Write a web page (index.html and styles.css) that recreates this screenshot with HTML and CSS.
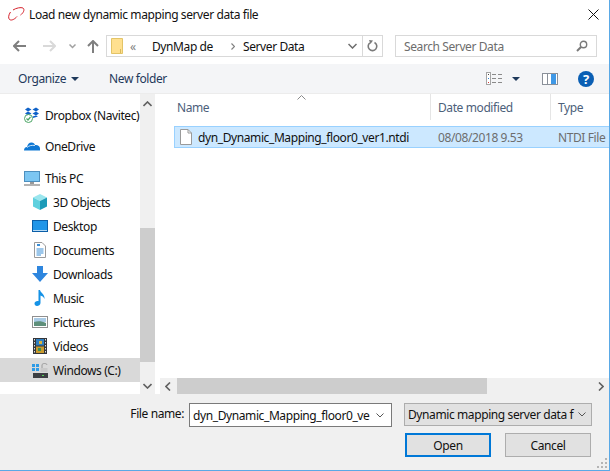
FILE: index.html
```html
<!DOCTYPE html>
<html lang="en">
<head>
  <meta charset="UTF-8">
  <title>Load new dynamic mapping server data file</title>
  <link rel="stylesheet" href="styles.css">
</head>
<body>

  <div class="window">

    <div class="titlebar">
      <svg class="logo" width="17" height="14" viewBox="0 0 17 14"><path d="M5 3C8 1 13 0 15 1C17 2.500 15.500 6 12.500 8M2.500 5C0.500 8 0 11 1.500 12.500C3.500 14 7 12 9 9.500" fill="none" stroke="#d5222c" stroke-width="1"/></svg>
      <span class="title">Load new dynamic mapping server data file</span>
      <svg class="close" width="11" height="11" viewBox="0 0 11 11"><path d="M0.500 0.500L10.500 10.500M10.500 0.500L0.500 10.500" stroke="#111" stroke-width="1"/></svg>
    </div>

    <div class="navbar">
      <svg class="nav-icon" width="13" height="12" viewBox="0 0 13 12"><path d="M6 1L1 6L6 11M1 6H13" fill="none" stroke="#7f7f7f" stroke-width="2"/></svg>
      <svg class="nav-icon forward" width="13" height="12" viewBox="0 0 13 12"><path d="M7 1L12 6L7 11M12 6H0" fill="none" stroke="#d9d9d9" stroke-width="2"/></svg>
      <svg class="nav-icon recent" width="7" height="5" viewBox="0 0 7 5"><path d="M0.500 0.500L3.500 3.500L6.500 0.500" fill="none" stroke="#a0a0a0" stroke-width="1.500"/></svg>
      <svg class="nav-icon up" width="12" height="13" viewBox="0 0 12 13"><path d="M1 6L6 1L11 6M6 1V13" fill="none" stroke="#7f7f7f" stroke-width="2"/></svg>

      <div class="address">
        <svg class="folder" width="12" height="16" viewBox="0 0 12 16"><path d="M0.500 0.500H11.500V15.500H0.500Z" fill="#ffe08f" stroke="#e3c467"/><path d="M9.500 11V15" stroke="#d8b95e"/></svg>
        <span class="crumb-more">«</span>
        <span class="crumb">DynMap de</span>
        <svg class="crumb-sep" width="4" height="7" viewBox="0 0 4 7"><path d="M0.500 0.500L3.500 3.500L0.500 6.500" fill="none" stroke="#808080" stroke-width="1.200"/></svg>
        <span class="crumb">Server Data</span>
        <svg class="address-down" width="9" height="6" viewBox="0 0 9 6"><path d="M0.500 1L4.500 5L8.500 1" fill="none" stroke="#6d6d6d" stroke-width="1.500"/></svg>
        <div class="refresh">
          <svg width="11" height="12" viewBox="0 0 11 12"><path d="M7.500 2.500A4.300 4.300 0 1 1 3 2.800" fill="none" stroke="#7a7a7a" stroke-width="1.600"/><path d="M2 0L6 0.500L3.500 4Z" fill="#7a7a7a"/></svg>
        </div>
      </div>

      <div class="search">
        <span>Search Server Data</span>
        <svg width="12" height="12" viewBox="0 0 12 12"><circle cx="7.500" cy="4.500" r="3.200" fill="none" stroke="#7a7a7a" stroke-width="1.400"/><path d="M5 7L1 11" stroke="#7a7a7a" stroke-width="2"/></svg>
      </div>
    </div>

    <div class="toolbar">
      <span class="tool">Organize</span>
      <span class="caret"></span>
      <span class="tool new-folder">New folder</span>
      <svg class="views" width="16" height="13" viewBox="0 0 16 13">
        <rect x="0.500" y="0.500" width="4" height="12" fill="#fff" stroke="#a5a5a5"/>
        <rect x="2" y="2" width="1" height="1" fill="#444"/>
        <rect x="2" y="6" width="1" height="1" fill="#2d7fd0"/>
        <rect x="2" y="10" width="1" height="1" fill="#d53a3a"/>
        <path d="M6 2.500H10M12 2.500H16M6 6.500H10M12 6.500H16M6 10.500H10M12 10.500H16" stroke="#8a8a8a"/>
      </svg>
      <span class="caret views-caret"></span>
      <svg class="pane-toggle" width="16" height="12" viewBox="0 0 16 12">
        <rect x="0.500" y="0.500" width="15" height="11" fill="#fff" stroke="#8a9099"/>
        <path d="M5.500 0.500V11.500" stroke="#8a9099"/>
        <rect x="9" y="1" width="5" height="10" fill="#3f98e6"/>
      </svg>
      <div class="help">?</div>
    </div>

    <div class="main">
      <div class="nav-pane">
        <div class="nav-list">

          <div class="nav-item top-item">
            <svg class="item-icon" width="16" height="16" viewBox="0 0 16 16">
              <path d="M1 2.500L4 0.500L7.500 2.500L4 4.500ZM8.500 2.500L12 0.500L15 2.500L12 4.500ZM1 6.500L4 4.500L7.500 6.500L4 8.500ZM8.500 6.500L12 4.500L15 6.500L12 8.500ZM8.500 9.500L12 8.500L14 9.500L9 11Z" fill="#0f62c8"/>
              <circle cx="4.500" cy="11.500" r="4" fill="#fff" stroke="#4aa564"/>
              <path d="M2.500 11.500L4 13L6.500 10" fill="none" stroke="#4aa564" stroke-width="1.200"/>
            </svg>
            <span>Dropbox (Navitec)</span>
          </div>

          <div class="nav-item top-item onedrive">
            <svg class="item-icon" width="16" height="10" viewBox="0 0 16 10"><path d="M0 9.500C0 7 1.500 6 3 6C3.500 3.500 5 1.500 7.500 1.500C9.500 1.500 10.500 2.500 11 4C13.500 3.500 16 5 16 7.500V9.500Z" fill="#0f78d4"/><path d="M3 6.500C5 4.500 8 4 11 4.500" fill="none" stroke="#fff" stroke-width="0.800"/></svg>
            <span>OneDrive</span>
          </div>

          <div class="nav-item top-item this-pc">
            <svg class="item-icon" width="16" height="15" viewBox="0 0 16 15"><rect x="0.500" y="0.500" width="15" height="10" fill="#7cc6f2" stroke="#4d8fbe"/><path d="M6 11H10V13H6Z" fill="#9a9a9a"/><path d="M0 14H16" stroke="#9a9a9a" stroke-width="1.500"/></svg>
            <span>This PC</span>
          </div>

          <div class="nav-item">
            <svg class="item-icon" width="16" height="16" viewBox="0 0 16 16"><path d="M8 0L15 3.500L8 7L1 3.500Z" fill="#9be6ee"/><path d="M1 3.500L8 7V16L1 12.500Z" fill="#5fd0de"/><path d="M15 3.500L8 7V16L15 12.500Z" fill="#1c9bb8"/></svg>
            <span>3D Objects</span>
          </div>

          <div class="nav-item">
            <svg class="item-icon" width="16" height="12" viewBox="0 0 16 12"><rect x="0.500" y="0.500" width="15" height="11" fill="#1f95e8" stroke="#0a5ea8"/><path d="M1 10.500H15" stroke="#b9dcf6"/></svg>
            <span>Desktop</span>
          </div>

          <div class="nav-item">
            <svg class="item-icon" width="16" height="16" viewBox="0 0 12 16"><path d="M0.500 0.500H8L11.500 4V15.500H0.500Z" fill="#fff" stroke="#9a9a9a"/><path d="M2.500 7H9.500M2.500 9H9.500M2.500 11H9.500M2.500 13H7" stroke="#3b8fd6"/><path d="M3 3H6" stroke="#3b8fd6" stroke-width="2"/></svg>
            <span>Documents</span>
          </div>

          <div class="nav-item">
            <svg class="item-icon" width="16" height="16" viewBox="0 0 16 16"><path d="M5 0H11V7H16L8 16L0 7H5Z" fill="#2e86de"/></svg>
            <span>Downloads</span>
          </div>

          <div class="nav-item">
            <svg class="item-icon" width="16" height="16" viewBox="0 0 11 16"><path d="M4 0H5.500C6 3 10.500 4 10 9C9 6.500 7.500 6 6 5.500V13C6 15 4 16 2.500 16C1 16 0 15 0 13.500C0 12 1.500 11 3 11C3.500 11 4 11.100 4 11.200Z" fill="#1592e6"/></svg>
            <span>Music</span>
          </div>

          <div class="nav-item">
            <svg class="item-icon" width="16" height="12" viewBox="0 0 16 12"><rect x="0.500" y="0.500" width="15" height="11" fill="#fff" stroke="#8f8f8f"/><rect x="2" y="2" width="12" height="4" fill="#a9cbe6"/><path d="M2 6C6 4.500 10 5 14 7V10H2Z" fill="#5e8f7a"/></svg>
            <span>Pictures</span>
          </div>

          <div class="nav-item">
            <svg class="item-icon" width="16" height="16" viewBox="0 0 14 16"><rect width="14" height="16" fill="#33363a"/><rect x="3" y="1" width="8" height="6.500" fill="#2f7fc0"/><rect x="3" y="8.500" width="8" height="6.500" fill="#c99a2e"/><rect x="6" y="3" width="3" height="3" fill="#d9b23c"/><rect x="5" y="10" width="3" height="3" fill="#3a8f5a"/><path d="M1.500 1V15M12.500 1V15" stroke="#ddd" stroke-dasharray="1.500 1.500"/></svg>
            <span>Videos</span>
          </div>

          <div class="nav-item selected">
            <svg class="item-icon" width="16" height="16" viewBox="0 0 16 16">
              <path d="M0 2H3V5H0ZM4 2H7V5H4ZM0 6H3V9H0ZM4 6H7V9H4Z" fill="#2e9be6"/>
              <path d="M10 6V3C10 1 15 1 15 3" fill="none" stroke="#9a9a9a"/>
              <rect x="8.500" y="6" width="7" height="4" fill="#c9c9c9"/>
              <rect x="1" y="11" width="15" height="5" fill="#3c3f42"/>
              <rect x="10" y="13" width="2" height="1" fill="#58d058"/>
            </svg>
            <span>Windows (C:)</span>
          </div>

        </div>

        <div class="vscroll">
          <div class="arrow-box up-box">
            <svg width="9" height="6" viewBox="0 0 9 6"><path d="M0.500 5L4.500 1L8.500 5" fill="none" stroke="#606060" stroke-width="1.600"/></svg>
          </div>
          <div class="thumb-v"></div>
          <div class="arrow-box down-box">
            <svg width="9" height="6" viewBox="0 0 9 6"><path d="M0.500 1L4.500 5L8.500 1" fill="none" stroke="#606060" stroke-width="1.600"/></svg>
          </div>
        </div>
      </div>

      <div class="files">
        <div class="file-head">
          <div class="col col-name">Name<svg class="sort" width="9" height="5" viewBox="0 0 9 5"><path d="M0.500 4.500L4.500 0.500L8.500 4.500" fill="none" stroke="#8a8a8a"/></svg></div>
          <div class="col">Date modified</div>
          <div class="col col-last">Type</div>
        </div>

        <div class="file-row">
          <div class="file-name">
            <svg width="12" height="16" viewBox="0 0 12 16"><path d="M0.500 0.500H8L11.500 4V15.500H0.500Z" fill="#fff" stroke="#9a9a9a"/><path d="M8 0.500V4H11.500" fill="none" stroke="#9a9a9a"/></svg>
            <span>dyn_Dynamic_Mapping_floor0_ver1.ntdi</span>
          </div>
          <div class="file-info">08/08/2018 9.53</div>
          <div class="file-info">NTDI File</div>
        </div>

        <div class="hscroll">
          <svg class="h-left" width="6" height="9" viewBox="0 0 6 9"><path d="M5 0.500L1 4.500L5 8.500" fill="none" stroke="#606060" stroke-width="1.600"/></svg>
          <div class="thumb-h"></div>
          <svg class="h-right" width="6" height="9" viewBox="0 0 6 9"><path d="M1 0.500L5 4.500L1 8.500" fill="none" stroke="#606060" stroke-width="1.600"/></svg>
        </div>
      </div>
    </div>

    <div class="bottom">
      <div class="file-line">
        <label class="file-label">File name:</label>
        <div class="name-box">
          <span class="clip">dyn_Dynamic_Mapping_floor0_ve</span>
          <svg width="8" height="5" viewBox="0 0 8 5"><path d="M0.500 0.500L4 4L7.500 0.500" fill="none" stroke="#555"/></svg>
        </div>
        <div class="filter-box">
          <span class="clip">Dynamic mapping server data f</span>
          <svg width="8" height="5" viewBox="0 0 8 5"><path d="M0.500 0.500L4 4L7.500 0.500" fill="none" stroke="#555"/></svg>
        </div>
      </div>
      <div class="actions">
        <button type="button" class="btn btn-open">Open</button>
        <button type="button" class="btn">Cancel</button>
      </div>
      <svg class="grip" width="11" height="11" viewBox="0 0 11 11"><path d="M8 0H10V2H8ZM4 4H6V6H4ZM8 4H10V6H8ZM0 8H2V10H0ZM4 8H6V10H4ZM8 8H10V10H8Z" fill="#b5b5b5"/></svg>
    </div>

  </div>

</body>
</html>
```

FILE: styles.css
```css
body {
  font-family: "Noto Sans", "Open Sans", sans-serif;
  font-size: 12px;
  letter-spacing: -0.4px;
  color: #111;
  background-color: #fff;
  margin: 0;
  padding: 0;
  overflow: hidden;
}

svg {
  display: block;
  flex-shrink: 0;
}

.window {
  width: 610px;
  height: 471px;
  box-sizing: border-box;
  display: flex;
  flex-direction: column;
  border-right: 1px solid #5aa9e6;
  border-bottom: 1px solid #5aa9e6;
  position: relative;
}

.titlebar {
  height: 30px;
  display: flex;
  align-items: center;
  padding-left: 8px;
  padding-right: 10px;
  padding-bottom: 2px;
  box-sizing: border-box;
}

.title {
  margin-left: 4px;
  flex: 1;
}

.navbar {
  height: 34px;
  display: flex;
  align-items: flex-start;
  padding-top: 5px;
  padding-left: 13px;
  box-sizing: border-box;
}

.nav-icon {
  margin-top: 5px;
}

.forward {
  margin-left: 17px;
}

.recent {
  margin-left: 13px;
  margin-top: 9px;
}

.up {
  margin-left: 11px;
}

.address {
  width: 277px;
  height: 22px;
  margin-left: 7px;
  box-sizing: border-box;
  border: 1px solid #d9d9d9;
  display: flex;
  align-items: center;
  padding-left: 4px;
}

.crumb-more {
  margin-left: 7px;
  width: 22px;
  color: #808080;
}

.crumb-sep {
  margin-left: 18px;
  margin-right: 8px;
}

.address-down {
  margin-left: auto;
  margin-right: 5px;
}

.refresh {
  width: 19px;
  height: 20px;
  border-left: 1px solid #d9d9d9;
  display: flex;
  align-items: center;
  justify-content: center;
}

.search {
  width: 202px;
  height: 22px;
  margin-left: 12px;
  box-sizing: border-box;
  border: 1px solid #d9d9d9;
  display: flex;
  align-items: center;
  justify-content: space-between;
  padding-left: 8px;
  padding-right: 8px;
  color: #6d6d6d;
}

.toolbar {
  height: 30px;
  background-color: #f4f5f7;
  border-bottom: 1px solid #ececec;
  box-sizing: border-box;
  display: flex;
  align-items: center;
  padding-left: 18px;
  padding-right: 15px;
}

.tool {
  color: #1e395b;
}

.caret {
  width: 0;
  height: 0;
  border-left: 4px solid transparent;
  border-right: 4px solid transparent;
  border-top: 4px solid #1e395b;
  margin-left: 5px;
}

.new-folder {
  margin-left: 30px;
}

.views {
  margin-left: auto;
}

.views-caret {
  margin-left: 10px;
}

.pane-toggle {
  margin-left: 22px;
}

.help {
  width: 16px;
  height: 16px;
  margin-left: 20px;
  border-radius: 50%;
  background-color: #0a5fb4;
  color: #fff;
  font-weight: 700;
  font-size: 13px;
  line-height: 16px;
  text-align: center;
}

.main {
  flex: 1;
  display: flex;
  min-height: 0;
}

.nav-pane {
  width: 155px;
  display: flex;
  background-color: #fff;
}

.nav-list {
  width: 140px;
  padding-top: 9px;
  overflow: hidden;
}

.nav-item {
  height: 24px;
  display: flex;
  align-items: center;
  white-space: nowrap;
  padding-left: 32px;
  overflow: hidden;
}

.item-icon {
  margin-right: 5px;
}

.top-item {
  padding-left: 24px;
}

.onedrive {
  margin-top: 7px;
}

.this-pc {
  margin-top: 8px;
}

.selected {
  background-color: #d9d9d9;
}

.vscroll {
  width: 15px;
  background-color: #f0f0f0;
  display: flex;
  flex-direction: column;
  align-items: center;
}

.arrow-box {
  display: flex;
  justify-content: center;
}

.up-box {
  height: 134px;
  padding-top: 7px;
  box-sizing: border-box;
}

.thumb-v {
  width: 15px;
  height: 134px;
  background-color: #cdcdcd;
}

.down-box {
  flex: 1;
  align-items: flex-end;
  padding-bottom: 5px;
}

.files {
  flex: 1;
  margin-left: 3px;
  min-width: 0;
  display: flex;
  flex-direction: column;
}

.file-head {
  display: grid;
  grid-template-columns: 273px 120px 1fr;
  height: 26px;
  color: #4c607a;
}

.col {
  padding-left: 7px;
  padding-top: 5px;
  border-right: 1px solid #e5e5e5;
}

.col-name {
  padding-left: 19px;
  position: relative;
}

.col-last {
  border-right: none;
}

.sort {
  position: absolute;
  left: 139px;
  top: 1px;
}

.file-row {
  display: grid;
  grid-template-columns: 256px 120px 1fr;
  height: 22px;
  box-sizing: border-box;
  margin-top: 6px;
  margin-left: 16px;
  background-color: #cce8ff;
  border: 1px solid #99d1ff;
  border-right: none;
  align-items: center;
  white-space: nowrap;
}

.file-name {
  display: flex;
  align-items: center;
  padding-left: 5px;
  gap: 6px;
}

.file-info {
  padding-left: 7px;
  color: #6d6d6d;
}

.hscroll {
  margin-top: auto;
  margin-left: 2px;
  height: 16px;
  background-color: #f0f0f0;
  display: flex;
  align-items: center;
}

.h-left {
  margin-left: 5px;
}

.thumb-h {
  width: 310px;
  height: 16px;
  margin-left: 6px;
  background-color: #cdcdcd;
}

.h-right {
  margin-left: auto;
  margin-right: 5px;
}

.bottom {
  height: 76px;
  background-color: #f0f0f0;
  box-sizing: border-box;
  padding-top: 9px;
  position: relative;
}

.file-line {
  display: flex;
  align-items: flex-start;
}

.file-label {
  width: 184px;
  line-height: 22px;
  text-align: right;
}

.name-box {
  width: 203px;
  height: 24px;
  margin-left: 5px;
  box-sizing: border-box;
  border: 1px solid #7a7a7a;
  background-color: #fff;
  display: flex;
  align-items: center;
  padding-left: 3px;
  padding-right: 7px;
}

.filter-box {
  width: 188px;
  height: 23px;
  margin-left: 12px;
  box-sizing: border-box;
  border: 1px solid #adadad;
  background-color: #e1e1e1;
  display: flex;
  align-items: center;
  padding-left: 3px;
  padding-right: 5px;
}

.clip {
  flex: 1;
  white-space: nowrap;
}

.actions {
  display: flex;
  gap: 14px;
  margin-top: 6px;
  padding-left: 405px;
}

.btn {
  width: 86px;
  height: 24px;
  padding: 0;
  font: inherit;
  letter-spacing: inherit;
  color: #111;
  background-color: #e1e1e1;
  border: 1px solid #adadad;
}

.btn-open {
  border: 2px solid #0078d7;
}

.grip {
  position: absolute;
  right: 1px;
  bottom: 1px;
}
```
